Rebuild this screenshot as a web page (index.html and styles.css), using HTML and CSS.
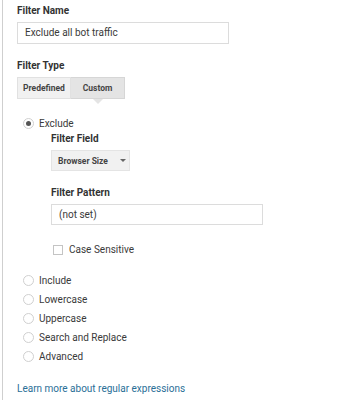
FILE: index.html
```html
<!DOCTYPE html>
<html>
<head>
<meta charset="utf-8">
<link rel="stylesheet" href="styles.css">
</head>
<body>
<div class="page">
  <div class="label name-label">Filter Name</div>
  <div class="input name-input">Exclude all bot traffic</div>

  <div class="label type-label">Filter Type</div>
  <div class="tabs">
    <div class="tab">Predefined</div>
    <div class="tab active">Custom</div>
  </div>

  <div class="options">
    <div class="radio-row">
      <span class="radio checked"></span><span>Exclude</span>
    </div>
    <div class="sub">
      <div class="label sub-label">Filter Field</div>
      <div class="select"><span>Browser Size</span><span class="caret"></span></div>
      <div class="label pattern-label">Filter Pattern</div>
      <div class="input pattern-input">(not set)</div>
      <div class="check-row"><span class="checkbox"></span><span>Case Sensitive</span></div>
    </div>
    <div class="radio-list">
      <div class="radio-row"><span class="radio"></span><span>Include</span></div>
      <div class="radio-row"><span class="radio"></span><span>Lowercase</span></div>
      <div class="radio-row"><span class="radio"></span><span>Uppercase</span></div>
      <div class="radio-row"><span class="radio"></span><span>Search and Replace</span></div>
      <div class="radio-row"><span class="radio"></span><span>Advanced</span></div>
    </div>
  </div>

  <a class="link" href="#">Learn more about regular expressions</a>
</div>
</body>
</html>
```
FILE: styles.css
```css
html, body {
  margin: 0;
  padding: 0;
  background: #fff;
}
body {
  font-family: Roboto, "Liberation Sans", sans-serif;
  font-size: 10px;
  color: #333;
}
.page {
  margin-left: 2px;
  border-left: 1px solid #cfcfcf;
  min-height: 400px;
  padding: 4px 0 0 14px;
  box-sizing: border-box;
  display: flex;
  flex-direction: column;
  align-items: flex-start;
}
.label {
  font-weight: 700;
  font-size: 10px;
  color: #333;
  line-height: 14px;
}
.input {
  box-sizing: border-box;
  border: 1px solid #dcdcdc;
  background: #fff;
  height: 22px;
  line-height: 20px;
  padding-left: 7px;
  font-size: 10px;
  color: #3a3a3a;
}
.name-input { width: 212px; margin-top: 4px; }
.type-label { margin-top: 15px; }
.tabs {
  display: flex;
  margin-top: 4px;
  position: relative;
}
.tab {
  box-sizing: border-box;
  height: 22px;
  line-height: 21px;
  width: 54px;
  text-align: center;
  font-size: 8.5px;
  font-weight: 700;
  color: #444;
  background: #f1f1f1;
  border: 1px solid #e1e1e1;
}
.tab + .tab { border-left: none; }
.tab.active {
  background: #e4e4e4;
  border-color: #d6d6d6;
  position: relative;
}
.tab.active::after {
  content: "";
  position: absolute;
  left: 22px;
  top: 21px;
  border-left: 5px solid transparent;
  border-right: 5px solid transparent;
  border-top: 5px solid #e4e4e4;
}
.options { margin-top: 15px; margin-left: 6px; display: flex; flex-direction: column; }
.radio-row {
  display: flex;
  align-items: center;
  height: 19px;
  font-size: 10px;
  color: #3a3a3a;
}
.radio {
  box-sizing: border-box;
  width: 11px;
  height: 11px;
  border: 1px solid #d0d0d0;
  border-radius: 50%;
  margin-right: 5px;
  display: flex;
  align-items: center;
  justify-content: center;
}
.radio.checked::after {
  content: "";
  width: 5px;
  height: 5px;
  border-radius: 50%;
  background: #555;
}
.sub { margin-left: 28px; margin-top: -1px; display: flex; flex-direction: column; align-items: flex-start; }
.select {
  box-sizing: border-box;
  margin-top: 4px;
  width: 79px;
  height: 21px;
  background: #f1f1f1;
  border: 1px solid #e4e4e4;
  display: flex;
  align-items: center;
  padding-left: 6px;
  font-size: 8.5px;
  font-weight: 700;
  color: #444;
  white-space: nowrap;
}
.caret {
  margin-left: 12px;
  border-left: 3px solid transparent;
  border-right: 3px solid transparent;
  border-top: 3px solid #666;
}
.pattern-label { margin-top: 15px; }
.pattern-input { width: 212px; margin-top: 4px; height: 21px; line-height: 19px; }
.check-row {
  margin-top: 19px;
  display: flex;
  align-items: center;
  font-size: 10px;
  margin-left: 2px;
  color: #3a3a3a;
}
.checkbox {
  box-sizing: border-box;
  width: 10px;
  height: 10px;
  border: 1px solid #c4c4c4;
  margin-right: 6px;
}
.radio-list { margin-top: 16px; display: flex; flex-direction: column; }
.link {
  margin-top: 17px;
  color: #2a6f97;
  text-decoration: none;
  font-size: 10px;
}
```
